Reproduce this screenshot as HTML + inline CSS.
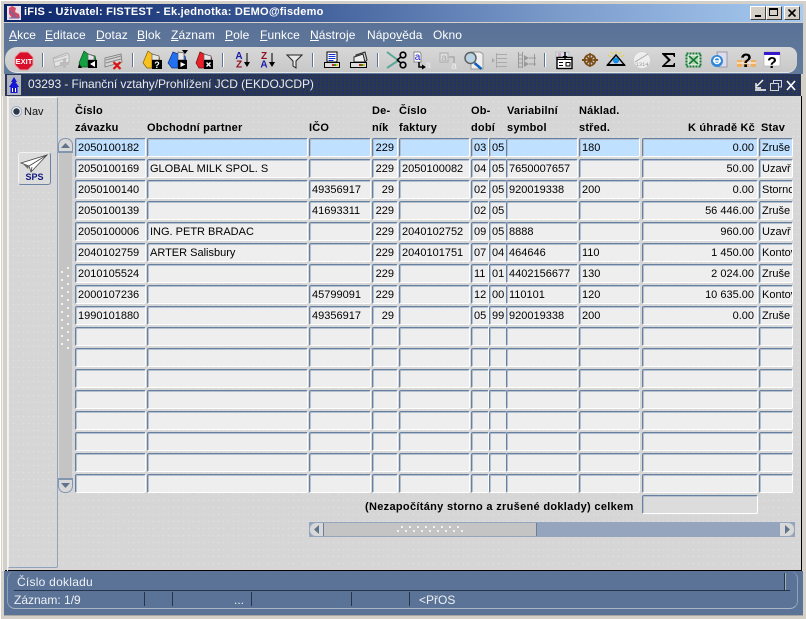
<!DOCTYPE html>
<html><head><meta charset="utf-8"><title>iFIS</title>
<style>
html,body{margin:0;padding:0;background:#d4d0c8}
#p{position:relative;width:806px;height:619px;overflow:hidden;font:11px/13px "Liberation Sans",sans-serif;color:#000;background:#d4d0c8}
#p div,#p span,#p svg{position:absolute;white-space:nowrap}
.n{background-color:#d6d6d6;background-image:radial-gradient(circle,#dcd2d2 .7px,transparent 1px),radial-gradient(circle,#dcdee0 .7px,transparent 1px);background-size:7px 5px,5px 7px;background-position:0 0,3px 2px}
.w{color:#fff}
.m{top:28px;color:#fff;font-size:12px;line-height:15px;letter-spacing:.1px}
.m u{text-decoration:underline}
.s{top:53px;width:2px;height:14px;background:linear-gradient(90deg,#5e7695 50%,#fff 50%)}
.h{font-weight:bold;letter-spacing:.2px;line-height:13px}
.r{left:0;width:806px;height:19px}
.r span{top:0;height:17px;line-height:18px;background:#eeeeee;border:1px solid;border-color:#6580a0 #fff #fff #6580a0;box-shadow:inset 1px 1px 0 #b4c0ce;border-radius:2px;padding:0;overflow:hidden;text-indent:2px}
.a{left:75px;width:69px}.b{left:147px;width:159px}.c{left:309px;width:60px}.d{left:372px;width:24px;text-align:right}.e{left:399px;width:69px}.f{left:471px;width:16px}.g{left:489px;width:16px}.i{left:506px;width:70px}.j{left:579px;width:59px}.k{left:642px;width:114px;text-align:right}.l{left:759px;width:32px}
.k{text-indent:0}
.r .k{width:111px;padding-right:3px}
.r .d{width:21px;padding-right:3px;text-indent:0}
.r .sel{background:#c0e0ff}
.ic{top:49px;width:24px;height:24px}
</style></head><body><div id="p">

<!-- frame -->
<div style="left:0;top:0;width:806px;height:619px;background:#d4d0c8;border-top:1px solid #fff;border-left:1px solid #fff;box-sizing:border-box"></div>
<div style="left:2px;top:96px;width:1px;height:475px;background:#f4f4f4"></div>
<!-- title -->
<div style="left:4px;top:4px;width:799px;height:18px;background:linear-gradient(90deg,#0a246a 0,#3c5a96 35%,#7c9ccc 70%,#a6caf0 100%)"></div>
<svg style="left:6px;top:5px" width="16" height="16" viewBox="0 0 16 16"><rect x="1" y="1" width="14" height="14" fill="#e8e0e8"/><path d="M3 3l3-2 4 2-1 4 4 2 1 4H6L3 9z" fill="#d04a68"/><path d="M3 13h10M4 6l6 6" stroke="#5a6ab0"/></svg>
<div style="left:24px;top:5px;color:#fff;font-weight:bold;font-size:11px;line-height:15px;letter-spacing:.23px">iFIS - Uživatel: FISTEST - Ek.jednotka: DEMO@fisdemo</div>
<!-- window buttons -->
<div style="left:750px;top:6px;width:16px;height:14px;background:#d4d0c8;border:1px solid;border-color:#fff #404040 #404040 #fff;box-sizing:border-box"></div>
<div style="left:755px;top:15px;width:6px;height:2px;background:#000"></div>
<div style="left:766px;top:6px;width:16px;height:14px;background:#d4d0c8;border:1px solid;border-color:#fff #404040 #404040 #fff;box-sizing:border-box"></div>
<div style="left:769px;top:8px;width:9px;height:8px;border:1px solid #000;border-top-width:2px;box-sizing:border-box"></div>
<div style="left:784px;top:6px;width:16px;height:14px;background:#d4d0c8;border:1px solid;border-color:#fff #404040 #404040 #fff;box-sizing:border-box"></div>
<svg style="left:784px;top:6px" width="16" height="14"><path d="M4.500 3.500l7 7M11.500 3.500l-7 7" stroke="#000" stroke-width="1.600"/></svg>

<!-- menu + toolbar background -->
<div style="left:4px;top:23px;width:799px;height:51px;background:linear-gradient(180deg,#5a7297,#637b9b)"></div>
<div class="m" style="left:9px"><u>A</u>kce</div>
<div class="m" style="left:45px"><u>E</u>ditace</div>
<div class="m" style="left:96px"><u>D</u>otaz</div>
<div class="m" style="left:137px"><u>B</u>lok</div>
<div class="m" style="left:171px"><u>Z</u>áznam</div>
<div class="m" style="left:225px"><u>P</u>ole</div>
<div class="m" style="left:260px"><u>F</u>unkce</div>
<div class="m" style="left:310px"><u>N</u>ástroje</div>
<div class="m" style="left:367px">Nápo<u>v</u>ěda</div>
<div class="m" style="left:433px">Okno</div>

<!-- toolbar -->
<div style="left:5px;top:47px;width:792px;height:25px;background:linear-gradient(180deg,#d8d8d8,#c8c8c8);border-radius:12px 8px 10px 12px;border-bottom:1px solid #e8e8e8"></div>
<div class="s" style="left:42px"></div><div class="s" style="left:132px"></div><div class="s" style="left:222px"></div><div class="s" style="left:312px"></div><div class="s" style="left:377px"></div><div class="s" style="left:544px"></div>

<svg class="ic" style="left:12px" viewBox="0 0 24 24"><path d="M8 3h8l5 5v8l-5 5H8l-5-5V8z" fill="#d8102c" stroke="#e8a0a0"/><text x="12" y="15" font-size="7.5" font-weight="bold" fill="#fff" text-anchor="middle" font-family="Liberation Sans">EXIT</text></svg>
<svg class="ic" style="left:49px" viewBox="0 0 24 24"><path d="M4 9l14-5 2 2v8l-14 4z" fill="#e4e4e4" stroke="#b4b4b4"/><path d="M5 10l13-4M5 13l13-4" stroke="#bcbcbc"/><path d="M11 14.500h9M15.500 10v9" stroke="#bcbcbc" stroke-width="3"/></svg>
<svg class="ic" style="left:76px" viewBox="0 0 24 24"><path d="M3 14L8 2l4 3 7 2 1 4H12v7H5z" fill="#14a040" stroke="#0a5020" stroke-width=".7"/><path d="M12 5l6 2v4h-6z" fill="#e4e4e4" stroke="#666" stroke-width=".7"/><rect x="12" y="11" width="9" height="8" fill="#000"/><path d="M14 15l5-3v6z" fill="#fff"/><path d="M3 15l3 4H2z" fill="#000"/></svg>
<svg class="ic" style="left:101px" viewBox="0 0 24 24"><path d="M4 9l16-4 1 8-17 5z" fill="#d4d4d4" stroke="#777" stroke-width=".8"/><path d="M5 11l15-4M5 14l15-4" stroke="#888"/><path d="M12.500 13l7 7M19.500 13l-7 7" stroke="#e01010" stroke-width="2.200"/></svg>
<svg class="ic" style="left:140px" viewBox="0 0 24 24"><path d="M3 14L8 2l4 3 7 2 1 4H12v8H7z" fill="#f8c020" stroke="#806000" stroke-width=".7"/><path d="M12 5l7 2v4h-7z" fill="#e8e8e8" stroke="#666" stroke-width=".7"/><rect x="12" y="11" width="10" height="9" fill="#000"/><text x="17" y="19" font-size="9" font-weight="bold" fill="#fff" text-anchor="middle" font-family="Liberation Sans">?</text></svg>
<svg class="ic" style="left:166px" viewBox="0 0 24 24"><path d="M2 14L7 3l5 2 7 2 1 4H12v8H6z" fill="#2070f0" stroke="#103080" stroke-width=".7"/><path d="M12 3l6 1v7h-6z" fill="#e8e8e8" stroke="#555" stroke-width=".7"/><path d="M16 1h6l-3 4z" fill="#000"/><rect x="12" y="11" width="9" height="9" fill="#000"/><path d="M14.500 13l5 2.500-5 2.500z" fill="#fff"/></svg>
<svg class="ic" style="left:192px" viewBox="0 0 24 24"><path d="M4 14L8 3l4 2 7 2 1 4H12v8H7z" fill="#e82028" stroke="#701010" stroke-width=".7"/><path d="M12 5l7 2v4h-7z" fill="#e8e8e8" stroke="#666" stroke-width=".7"/><rect x="12" y="11" width="9" height="9" fill="#000"/><path d="M14.500 13.500l4 4M18.500 13.500l-4 4" stroke="#fff" stroke-width="1.400"/></svg>
<svg class="ic" style="left:229px" viewBox="0 0 24 24"><g font-family="Liberation Sans" font-weight="bold" font-size="10" text-anchor="middle"><text x="10" y="10" fill="#1a1aa8">A</text><text x="10" y="18.500" fill="#901020">Z</text></g><path d="M18 4v11" stroke="#000"/><path d="M15 13h6l-3 5z"/></svg>
<svg class="ic" style="left:256px" viewBox="0 0 24 24"><g font-family="Liberation Sans" font-weight="bold" font-size="10" text-anchor="middle"><text x="8" y="10" fill="#901020">Z</text><text x="8" y="18.500" fill="#1a1aa8">A</text></g><path d="M16 4v11" stroke="#000"/><path d="M13 13h6l-3 5z"/></svg>
<svg class="ic" style="left:282px" viewBox="0 0 24 24"><path d="M5 6h15l-6 6v7l-3-2v-5z" fill="#e8e8e8" stroke="#222"/></svg>
<svg class="ic" style="left:320px" viewBox="0 0 24 24"><rect x="7" y="3" width="10" height="10" fill="#fff" stroke="#000"/><path d="M8.500 5.500h7M8.500 7.500h7M8.500 9.500h7M8.500 11.500h5" stroke="#1030d0"/><path d="M4.500 13.500h15v5h-15z" fill="#ddd" stroke="#000"/><path d="M12 16h2" stroke="#e02020" stroke-width="2"/><path d="M14 16h2" stroke="#20a020" stroke-width="2"/><path d="M16 16h2" stroke="#e0c020" stroke-width="2"/></svg>
<svg class="ic" style="left:346px" viewBox="0 0 24 24"><path d="M10 6l9-3 2 8-2 2H10z" fill="#ccc" stroke="#222"/><path d="M8 8l9-3 2 8H8z" fill="#eee" stroke="#222"/><path d="M4.500 13.500h16v5h-16z" fill="#ddd" stroke="#000"/><path d="M13 16h2" stroke="#e02020" stroke-width="2"/><path d="M15 16h2" stroke="#20a020" stroke-width="2"/><path d="M17 16h2" stroke="#e0c020" stroke-width="2"/></svg>
<svg class="ic" style="left:385px" viewBox="0 0 24 24"><path d="M2 3l12 9M2 19l12-8" stroke="#5aa89a" stroke-width="2"/><circle cx="18" cy="6" r="2.800" fill="none" stroke="#000" stroke-width="1.700"/><circle cx="18" cy="16" r="2.800" fill="none" stroke="#000" stroke-width="1.700"/><path d="M12 11l4-3M12 11l4 3" stroke="#000" stroke-width="1.500"/></svg>
<svg class="ic" style="left:408px" viewBox="0 0 24 24"><path d="M6 3h6l1 2v8H6z" fill="#fff" stroke="#888"/><text x="9.500" y="11" font-size="10" fill="#1010d0" text-anchor="middle" font-family="Liberation Sans">a</text><path d="M11 13v5h5" fill="none" stroke="#000" stroke-width="1.500"/><path d="M14 15.500l4 2.500-4 2.500z"/><text x="20" y="19" font-size="10" fill="#e8e8e8" text-anchor="middle" font-family="Liberation Sans">a</text></svg>
<svg class="ic" style="left:437px" viewBox="0 0 24 24"><path d="M3 4h8v9H3z" fill="#ddd" stroke="#aaa"/><text x="7" y="12" font-size="10" fill="#aaa" text-anchor="middle" font-family="Liberation Sans">a</text><path d="M12 8h5v6" fill="none" stroke="#aaa" stroke-width="1.500"/><text x="17" y="20" font-size="10" fill="#ececec" text-anchor="middle" font-family="Liberation Sans">a</text></svg>
<svg class="ic" style="left:462px" viewBox="0 0 24 24"><path d="M9 3h9l3 2v15H9z" fill="#eee" stroke="#999"/><circle cx="8.500" cy="9" r="5.500" fill="#b8d4e4" stroke="#606060" stroke-width="1.500"/><path d="M12.500 14l7 6" stroke="#1060c0" stroke-width="2.500"/></svg>
<svg class="ic" style="left:489px" viewBox="0 0 24 24"><path d="M3 9l3 2.500-3 2.500z" fill="#aaa"/><path d="M7.500 4v15" stroke="#aaa"/><path d="M8 5.500h10M8 9.500h10M8 13.500h10M8 17.500h10" stroke="#aaa"/></svg>
<svg class="ic" style="left:515px" viewBox="0 0 24 24"><path d="M3.500 3v16M7.500 3v16M19.500 5v12" stroke="#999"/><path d="M3 6h5M3 10h5M3 14h5M3 18h5" stroke="#999"/><path d="M9 6l5 3-5 3zM9 12l5 3-5 3z" fill="#999"/><path d="M14 9h7M14 15h7" stroke="#999"/></svg>
<svg class="ic" style="left:553px" viewBox="0 0 24 24"><rect x="3" y="3" width="13" height="6" fill="#dde" stroke="#bbb"/><path d="M5 5h3M5 7h3" stroke="#c08080"/><rect x="4" y="8.500" width="15" height="11" fill="#fff" stroke="#000" stroke-width="1.400"/><path d="M4 10.500h15" stroke="#000"/><path d="M6 13.500h4M6 16.500h4M13 13.500h4v3.500h-4z" stroke="#000" fill="none"/><path d="M12 3v6" stroke="#000" stroke-width="1.500"/><path d="M9.500 7h5L12 10.500z"/></svg>
<svg class="ic" style="left:578px" viewBox="0 0 24 24"><g fill="none" stroke="#7a4a14" stroke-width="1.600"><circle cx="12" cy="11" r="5.500"/><path d="M6 11h12M12 4v14M8 7l8 8M16 7l-8 8"/></g><path d="M4 11h4M16 11h4" stroke="#7a4a14" stroke-width="2"/></svg>
<svg class="ic" style="left:604px" viewBox="0 0 24 24"><path d="M3.500 16L12 6l8.500 10z" fill="#cfcfe0" stroke="#000" stroke-width="1.400"/><circle cx="12" cy="11.500" r="3" fill="#1090e0"/><path d="M3 16h18" stroke="#000" stroke-width="2"/><path d="M4 6l3 2M20 6l-3 2M12 2v3M7 3l2 2M17 3l-2 2" stroke="#e8d030"/></svg>
<svg class="ic" style="left:630px" viewBox="0 0 24 24"><circle cx="12" cy="11" r="8.500" fill="#eee" stroke="#d0d0d0"/><path d="M5 13l13-8" stroke="#aaa"/><text x="12" y="17" font-size="5.500" fill="#999" text-anchor="middle" font-family="Liberation Mono">1314</text></svg>
<svg class="ic" style="left:657px" viewBox="0 0 24 24"><path d="M5 4h13v4h-1l-1-2H9l5 5-6 5h8l1-2h1v4H5v-1l6-6-6-6z" fill="#000"/></svg>
<svg class="ic" style="left:681px" viewBox="0 0 24 24"><rect x="5.500" y="4.500" width="14" height="13" fill="#dfe8df" stroke="#107a30" stroke-width="2" stroke-dasharray="2 1"/><rect x="8" y="7" width="9" height="8" fill="#b8d8b8"/><path d="M8 7l9 8M17 7l-9 8" stroke="#107a30" stroke-width="1.600"/></svg>
<svg class="ic" style="left:707px" viewBox="0 0 24 24"><path d="M10 3h10v15h-8z" fill="#dde" stroke="#99a"/><circle cx="10" cy="12" r="6" fill="#3088d8"/><path d="M6 12h8" stroke="#fff" stroke-width="1.500"/><circle cx="10" cy="11.500" r="3" fill="none" stroke="#fff" stroke-width="1.500"/></svg>
<svg class="ic" style="left:734px" viewBox="0 0 24 24"><rect x="3" y="11" width="5" height="7" fill="#f0b060"/><rect x="9.500" y="11" width="5" height="7" fill="#f0b060"/><rect x="17" y="11" width="5" height="7" fill="#f0b060"/><path d="M3 14h19" stroke="#fff"/><text x="12" y="18" font-size="19" font-weight="bold" fill="#000" text-anchor="middle" font-family="Liberation Sans">?</text></svg>
<svg class="ic" style="left:759px" viewBox="0 0 24 24"><rect x="5" y="3" width="16" height="14" fill="#fff" stroke="#aaa" stroke-width=".6"/><rect x="5" y="3" width="16" height="3" fill="#3818c8"/><text x="13" y="19" font-size="16" font-weight="bold" fill="#000" text-anchor="middle" font-family="Liberation Sans">?</text></svg>

<!-- inner window title -->
<div style="left:5px;top:74px;width:796px;height:22px;background-color:#2c384e;background-image:radial-gradient(circle,#1c2c78 .7px,transparent 1px);background-size:4px 3px"></div>
<svg style="left:7px;top:75px" width="14" height="20" viewBox="0 0 14 20"><rect x="0" y="0" width="14" height="20" fill="#b0b4c0"/><path d="M7 2L4 7h1.500L2 12h1.500v6h7v-6H12L8.500 7H10z" fill="#1418d0"/><path d="M5 13h1v4H5zM8 13h1v4H8z" fill="#fff"/></svg>
<div style="left:28px;top:77px;color:#e8eaf0;font-size:12px;line-height:15px;letter-spacing:-.06px">03293 - Finanční vztahy/Prohlížení JCD (EKDOJCDP)</div>
<svg style="left:752px;top:78px" width="44" height="14" viewBox="0 0 44 14"><path d="M3 12h11" stroke="#fff" stroke-width="1.500"/><path d="M11 2L5 8M4 5v5h5" fill="none" stroke="#fff" stroke-width="1.400"/><rect x="18.500" y="5.500" width="8" height="7" fill="none" stroke="#d0d4dc"/><path d="M21.500 5V2.500h8V9H27" fill="none" stroke="#d0d4dc"/><path d="M35 3l8 9M43 3l-8 9" stroke="#fff" stroke-width="1.600"/></svg>

<!-- content -->
<div class="n" style="left:8px;top:96px;width:793px;height:474px"></div>
<div style="left:801px;top:96px;width:1px;height:475px;background:#000"></div>
<div style="left:5px;top:570px;width:797px;height:1px;background:#000"></div>
<div style="left:7px;top:96px;width:1px;height:475px;background:#f4f4f4"></div>
<!-- left panel -->
<div style="left:8px;top:97px;width:48px;height:469px;border-top:1px solid #f0f0f0;border-right:1px solid #8fa2bb;border-bottom:1px solid #8fa2bb;border-left:1px solid #f0f0f0;border-radius:0 2px 2px 0"></div>
<svg style="left:11px;top:106px" width="11" height="11"><circle cx="5.500" cy="5.500" r="5" fill="#eee" stroke="#a0b0c4"/><circle cx="5.500" cy="5.500" r="3.200" fill="#2c3648"/></svg>
<div style="left:24px;top:106px;color:#111;font-size:11px">Nav</div>
<div style="left:18px;top:152px;width:31px;height:31px;border:1px solid;border-color:#f2f2f2 #6a82a0 #6a82a0 #f2f2f2;border-radius:3px;background:#dcdcdc"></div>
<svg style="left:20px;top:154px" width="28" height="20" viewBox="0 0 28 20"><path d="M1 9L27 1 11 18l-2-6z" fill="#fff" stroke="#444" stroke-width=".8"/><path d="M9 12L27 1M11 18l1-5" stroke="#444" fill="none" stroke-width=".8"/><path d="M3 10l6 2-1 3z" fill="#666"/></svg>
<div style="left:18px;top:172px;width:33px;text-align:center;font-size:9px;line-height:11px;font-weight:bold;color:#101880">SPS</div>

<!-- v scrollbar -->
<div style="left:57px;top:138px;width:1px;height:356px;background:#8fa2bb"></div>
<div style="left:58px;top:153px;width:14px;height:325px;background:#c4c4c4;border-left:1px solid #dcdcdc;box-sizing:border-box"></div>
<div style="left:58px;top:138px;width:15px;height:15px;background:#d8d8d8;border:1px solid #8396b0;border-bottom-width:2px;border-radius:7px 7px 0 0;box-sizing:border-box"></div>
<svg style="left:60px;top:142px" width="11" height="7"><path d="M1 6h9L5.500 1z" fill="#60728c"/></svg>
<div style="left:58px;top:478px;width:15px;height:15px;background:#d8d8d8;border:1px solid #8396b0;border-top-width:2px;border-radius:0 0 7px 7px;box-sizing:border-box"></div>
<svg style="left:60px;top:482px" width="11" height="7"><path d="M1 1h9L5.500 6z" fill="#60728c"/></svg>
<svg style="left:58px;top:262px" width="15" height="92"><g fill="#f4f4f4"><rect x="9" y="5" width="2" height="2"/><rect x="9" y="13" width="2" height="2"/><rect x="9" y="21" width="2" height="2"/><rect x="9" y="29" width="2" height="2"/><rect x="9" y="37" width="2" height="2"/><rect x="9" y="45" width="2" height="2"/><rect x="9" y="53" width="2" height="2"/><rect x="9" y="61" width="2" height="2"/><rect x="9" y="69" width="2" height="2"/><rect x="9" y="77" width="2" height="2"/><rect x="9" y="85" width="2" height="2"/><rect x="3" y="9" width="2" height="2"/><rect x="3" y="17" width="2" height="2"/><rect x="3" y="25" width="2" height="2"/><rect x="3" y="33" width="2" height="2"/><rect x="3" y="41" width="2" height="2"/><rect x="3" y="49" width="2" height="2"/><rect x="3" y="57" width="2" height="2"/><rect x="3" y="65" width="2" height="2"/><rect x="3" y="73" width="2" height="2"/><rect x="3" y="81" width="2" height="2"/></g></svg>

<!-- headers -->
<div class="h" style="left:75px;top:105px">Číslo</div><div class="h" style="left:75px;top:122px">závazku</div>
<div class="h" style="left:147px;top:122px">Obchodní partner</div>
<div class="h" style="left:309px;top:122px">IČO</div>
<div class="h" style="left:372px;top:105px">De-</div><div class="h" style="left:372px;top:122px">ník</div>
<div class="h" style="left:399px;top:105px">Číslo</div><div class="h" style="left:399px;top:122px">faktury</div>
<div class="h" style="left:471px;top:105px">Ob-</div><div class="h" style="left:471px;top:122px">dobí</div>
<div class="h" style="left:507px;top:105px">Variabilní</div><div class="h" style="left:507px;top:122px">symbol</div>
<div class="h" style="left:579px;top:105px">Náklad.</div><div class="h" style="left:579px;top:122px">střed.</div>
<div class="h" style="left:688px;top:122px">K úhradě Kč</div>
<div class="h" style="left:761px;top:122px">Stav</div>

<!-- rows -->
<div class="r" style="top:138px"><span class="a sel">2050100182</span><span class="b sel"></span><span class="c sel"></span><span class="d sel">229</span><span class="e sel"></span><span class="f sel">03</span><span class="g sel">05</span><span class="i sel"></span><span class="j sel">180</span><span class="k sel">0.00</span><span class="l sel">Zruše</span></div>
<div class="r" style="top:159px"><span class="a">2050100169</span><span class="b">GLOBAL MILK SPOL. S</span><span class="c"></span><span class="d">229</span><span class="e">2050100082</span><span class="f">04</span><span class="g">05</span><span class="i">7650007657</span><span class="j"></span><span class="k">50.00</span><span class="l">Uzavř</span></div>
<div class="r" style="top:180px"><span class="a">2050100140</span><span class="b"></span><span class="c">49356917</span><span class="d">29</span><span class="e"></span><span class="f">02</span><span class="g">05</span><span class="i">920019338</span><span class="j">200</span><span class="k">0.00</span><span class="l">Storno</span></div>
<div class="r" style="top:201px"><span class="a">2050100139</span><span class="b"></span><span class="c">41693311</span><span class="d">229</span><span class="e"></span><span class="f">02</span><span class="g">05</span><span class="i"></span><span class="j"></span><span class="k">56 446.00</span><span class="l">Zruše</span></div>
<div class="r" style="top:222px"><span class="a">2050100006</span><span class="b">ING. PETR BRADAC</span><span class="c"></span><span class="d">229</span><span class="e">2040102752</span><span class="f">09</span><span class="g">05</span><span class="i">8888</span><span class="j"></span><span class="k">960.00</span><span class="l">Uzavř</span></div>
<div class="r" style="top:243px"><span class="a">2040102759</span><span class="b">ARTER Salisbury</span><span class="c"></span><span class="d">229</span><span class="e">2040101751</span><span class="f">07</span><span class="g">04</span><span class="i">464646</span><span class="j">110</span><span class="k">1 450.00</span><span class="l">Kontov</span></div>
<div class="r" style="top:264px"><span class="a">2010105524</span><span class="b"></span><span class="c"></span><span class="d">229</span><span class="e"></span><span class="f">11</span><span class="g">01</span><span class="i">4402156677</span><span class="j">130</span><span class="k">2 024.00</span><span class="l">Zruše</span></div>
<div class="r" style="top:285px"><span class="a">2000107236</span><span class="b"></span><span class="c">45799091</span><span class="d">229</span><span class="e"></span><span class="f">12</span><span class="g">00</span><span class="i">110101</span><span class="j">120</span><span class="k">10 635.00</span><span class="l">Kontov</span></div>
<div class="r" style="top:306px"><span class="a">1990101880</span><span class="b"></span><span class="c">49356917</span><span class="d">29</span><span class="e"></span><span class="f">05</span><span class="g">99</span><span class="i">920019338</span><span class="j">200</span><span class="k">0.00</span><span class="l">Zruše</span></div>
<div class="r" style="top:327px"><span class="a"></span><span class="b"></span><span class="c"></span><span class="d"></span><span class="e"></span><span class="f"></span><span class="g"></span><span class="i"></span><span class="j"></span><span class="k"></span><span class="l"></span></div>
<div class="r" style="top:348px"><span class="a"></span><span class="b"></span><span class="c"></span><span class="d"></span><span class="e"></span><span class="f"></span><span class="g"></span><span class="i"></span><span class="j"></span><span class="k"></span><span class="l"></span></div>
<div class="r" style="top:369px"><span class="a"></span><span class="b"></span><span class="c"></span><span class="d"></span><span class="e"></span><span class="f"></span><span class="g"></span><span class="i"></span><span class="j"></span><span class="k"></span><span class="l"></span></div>
<div class="r" style="top:390px"><span class="a"></span><span class="b"></span><span class="c"></span><span class="d"></span><span class="e"></span><span class="f"></span><span class="g"></span><span class="i"></span><span class="j"></span><span class="k"></span><span class="l"></span></div>
<div class="r" style="top:411px"><span class="a"></span><span class="b"></span><span class="c"></span><span class="d"></span><span class="e"></span><span class="f"></span><span class="g"></span><span class="i"></span><span class="j"></span><span class="k"></span><span class="l"></span></div>
<div class="r" style="top:432px"><span class="a"></span><span class="b"></span><span class="c"></span><span class="d"></span><span class="e"></span><span class="f"></span><span class="g"></span><span class="i"></span><span class="j"></span><span class="k"></span><span class="l"></span></div>
<div class="r" style="top:453px"><span class="a"></span><span class="b"></span><span class="c"></span><span class="d"></span><span class="e"></span><span class="f"></span><span class="g"></span><span class="i"></span><span class="j"></span><span class="k"></span><span class="l"></span></div>
<div class="r" style="top:474px"><span class="a"></span><span class="b"></span><span class="c"></span><span class="d"></span><span class="e"></span><span class="f"></span><span class="g"></span><span class="i"></span><span class="j"></span><span class="k"></span><span class="l"></span></div>

<!-- sum -->
<div class="h" style="left:365px;top:501px;letter-spacing:.31px">(Nezapočítány storno a zrušené doklady) celkem</div>
<div class="r" style="top:495px"><span class="k" style="background:#dcdcdc"></span></div>

<!-- h scrollbar -->
<div style="left:309px;top:522px;width:486px;height:15px;background:#94a5bd"></div>
<div style="left:324px;top:523px;width:212px;height:13px;background:#c4c4c4;border-right:1px solid #6a7f9c"></div>
<div style="left:310px;top:523px;width:14px;height:13px;background:#d8d8d8;border-radius:6px 0 0 6px;border-right:1px solid #6a7f9c;box-sizing:border-box"></div>
<svg style="left:313px;top:525px" width="8" height="9"><path d="M6 0v9L1 4.500z" fill="#60728c"/></svg>
<div style="left:780px;top:523px;width:14px;height:13px;background:#d8d8d8;border-radius:0 6px 6px 0"></div>
<svg style="left:783px;top:525px" width="8" height="9"><path d="M2 0v9l5-4.500z" fill="#60728c"/></svg>
<svg style="left:396px;top:525px" width="70" height="10"><g fill="#f2f2f2"><rect x="1" y="5" width="2" height="2"/><rect x="5" y="1" width="2" height="2"/><rect x="9" y="5" width="2" height="2"/><rect x="13" y="1" width="2" height="2"/><rect x="17" y="5" width="2" height="2"/><rect x="21" y="1" width="2" height="2"/><rect x="25" y="5" width="2" height="2"/><rect x="29" y="1" width="2" height="2"/><rect x="33" y="5" width="2" height="2"/><rect x="37" y="1" width="2" height="2"/><rect x="41" y="5" width="2" height="2"/><rect x="45" y="1" width="2" height="2"/><rect x="49" y="5" width="2" height="2"/><rect x="53" y="1" width="2" height="2"/><rect x="57" y="5" width="2" height="2"/><rect x="61" y="1" width="2" height="2"/><rect x="65" y="5" width="2" height="2"/></g></svg>

<!-- status -->
<div style="left:4px;top:571px;width:799px;height:44px;background:#5b7396"></div>
<div style="left:7px;top:571px;width:789px;height:37px;border:1px solid #8fa2bb;border-top:0;border-radius:8px;border-bottom-color:#a8b6c8"></div>
<div style="left:14px;top:590px;width:776px;height:1px;background:#26344c"></div>
<div style="left:784px;top:573px;width:1px;height:17px;background:#26344c"></div><div style="left:785px;top:573px;width:1px;height:17px;background:#a0aec0"></div>
<div style="left:144px;top:592px;width:1px;height:14px;background:#26344c"></div>
<div style="left:172px;top:592px;width:1px;height:14px;background:#26344c"></div>
<div style="left:251px;top:592px;width:1px;height:14px;background:#26344c"></div>
<div style="left:351px;top:592px;width:1px;height:14px;background:#26344c"></div>
<div style="left:409px;top:592px;width:1px;height:14px;background:#26344c"></div>
<div class="w" style="left:17px;top:575px;font-size:12px;line-height:15px;letter-spacing:.25px;color:#eef1f6">Číslo dokladu</div>
<div class="w" style="left:14px;top:593px;font-size:12px;line-height:15px;color:#eef1f6">Záznam: 1/9</div>
<div class="w" style="left:234px;top:593px;font-size:12px;line-height:15px;color:#eef1f6">...</div>
<div class="w" style="left:419px;top:593px;font-size:12px;line-height:15px;color:#eef1f6">&lt;PřOS</div>
<div style="left:4px;top:615px;width:799px;height:1px;background:#a8a8a0"></div>
</div></body></html>
